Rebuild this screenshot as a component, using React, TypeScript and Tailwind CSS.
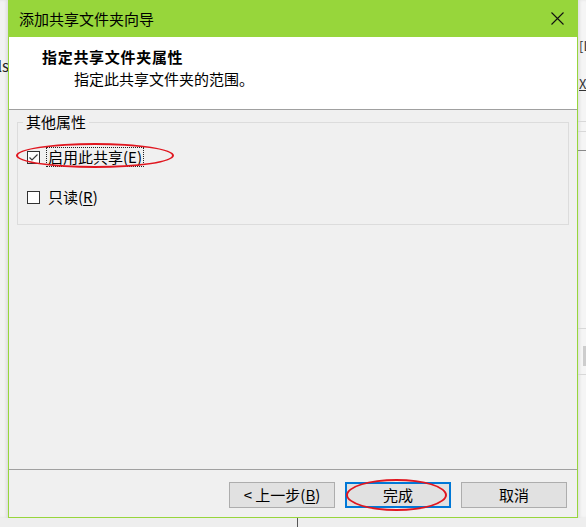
import React from "react";

const FONT = "font-['Noto_Sans_CJK_SC','Noto_Sans',sans-serif]";

const CheckBox: React.FC<{ checked?: boolean }> = ({ checked }) => (
  <span className="flex h-[13px] w-[13px] shrink-0 items-center justify-center border border-[#333333] bg-white">
    {checked && (
      <svg width="11" height="11" viewBox="0 0 11 11">
        <polyline points="1.5,5.5 4,8 9.5,2.5" fill="none" stroke="#3c3c3c" strokeWidth="1.2" />
      </svg>
    )}
  </span>
);

const Option: React.FC<{ label: string; hotkey: string; checked?: boolean; focused?: boolean }> = ({
  label,
  hotkey,
  checked,
  focused,
}) => (
  <div className="flex h-[20px] items-center">
    <CheckBox checked={checked} />
    <span
      className={
        "ml-[6px] px-[1px] leading-[18px] border " +
        (focused ? "border-dotted border-[#222222]" : "border-transparent")
      }
    >
      {label}(<span className="underline underline-offset-2">{hotkey}</span>)
    </span>
  </div>
);

const Button: React.FC<{ children: React.ReactNode; primary?: boolean }> = ({ children, primary }) => (
  <button
    className={
      "flex h-[26px] w-[106px] items-center justify-center bg-[#e1e1e1] text-[15px] text-black " +
      (primary ? "border-2 border-[#0078d7]" : "border border-[#adadad]")
    }
  >
    {children}
  </button>
);

export default function App() {
  return (
    <div className={`relative h-[527px] w-[586px] overflow-hidden bg-[#f0f0f0] text-[15px] text-black ${FONT}`}>
      <div className="flex h-[518px]">
        {/* left of the dialog */}
        <div className="w-[8px] overflow-hidden bg-[#f2f2f2] shadow-[inset_-2px_0_3px_rgba(0,0,0,0.08)]">
          <div className="mt-[56px] flex justify-end leading-[20px] text-[#222222]">
            <span className="-mr-[1px]">ls</span>
          </div>
        </div>

        {/* dialog */}
        <div className="flex w-[570px] flex-col border-x border-b border-[#97d63b] bg-[#f0f0f0]">
          <div className="-mx-[1px] flex h-[37px] items-center justify-between bg-[#97d63b] pl-[11px] pr-[14px]">
            <span className="leading-[20px]">添加共享文件夹向导</span>
            <svg width="13" height="13" viewBox="0 0 13 13">
              <path d="M0.5 0.5 L12.5 12.5 M12.5 0.5 L0.5 12.5" stroke="#111111" strokeWidth="1.1" />
            </svg>
          </div>

          <div className="h-[73px] border-b border-[#a0a0a0] bg-white pl-[33px] pt-[10px]">
            <div className="font-bold leading-[20px] tracking-[0.7px]">指定共享文件夹属性</div>
            <div className="mt-[2px] pl-[32px] leading-[20px]">指定此共享文件夹的范围。</div>
          </div>

          <div className="h-[359px] px-[8px] pt-[2px]">
            <fieldset className="h-[113px] border border-[#dcdcdc] pl-[9px]">
              <legend className="ml-[-4px] px-[3px] leading-[20px]">其他属性</legend>
              <div className="mt-[15px] flex flex-col gap-[20px]">
                <Option label="启用此共享" hotkey="E" checked focused />
                <Option label="只读" hotkey="R" />
              </div>
            </fieldset>
          </div>

          <div className="flex h-[48px] justify-end gap-[10px] border-t border-[#a0a0a0] pr-[10px] pt-[12px]">
            <Button>
              &lt; 上一步(<span className="underline underline-offset-2">B</span>)
            </Button>
            <Button primary>完成</Button>
            <Button>取消</Button>
          </div>
        </div>

        {/* right of the dialog */}
        <div className="flex w-[8px] flex-col overflow-hidden bg-[#f5f5f5] text-[13px] leading-[14px] text-[#333333] shadow-[inset_2px_0_3px_rgba(0,0,0,0.08)]">
          <span className="ml-[1px] mt-[39px]">[L</span>
          <span className="ml-[1px] mt-[24px] underline">X:</span>
          <div className="mt-[30px] h-px bg-[#d8d8d8]" />
          <div className="mt-[9px] h-px bg-[#d8d8d8]" />
          <div className="mt-[18px] h-px bg-[#8a8a8a]" />
          <div className="mt-[177px] h-px bg-[#d8d8d8]" />
          <div className="ml-[5px] mt-[17px] h-[20px] bg-[#cdcdcd]" />
          <div className="mt-[8px] h-px bg-[#d8d8d8]" />
        </div>
      </div>

      {/* below the dialog */}
      <div className="flex h-[9px] bg-[#eeeeee]">
        <div className="ml-[297px] w-px bg-[#555555]" />
      </div>

      {/* red annotation rings */}
      <div className="pointer-events-none absolute left-[16px] top-[143px] h-[25px] w-[158px] rounded-[50%] border-2 border-[#e0161f]" />
      <div className="pointer-events-none absolute left-[346px] top-[479px] h-[32px] w-[101px] rounded-[50%] border-2 border-[#e0161f]" />
    </div>
  );
}
